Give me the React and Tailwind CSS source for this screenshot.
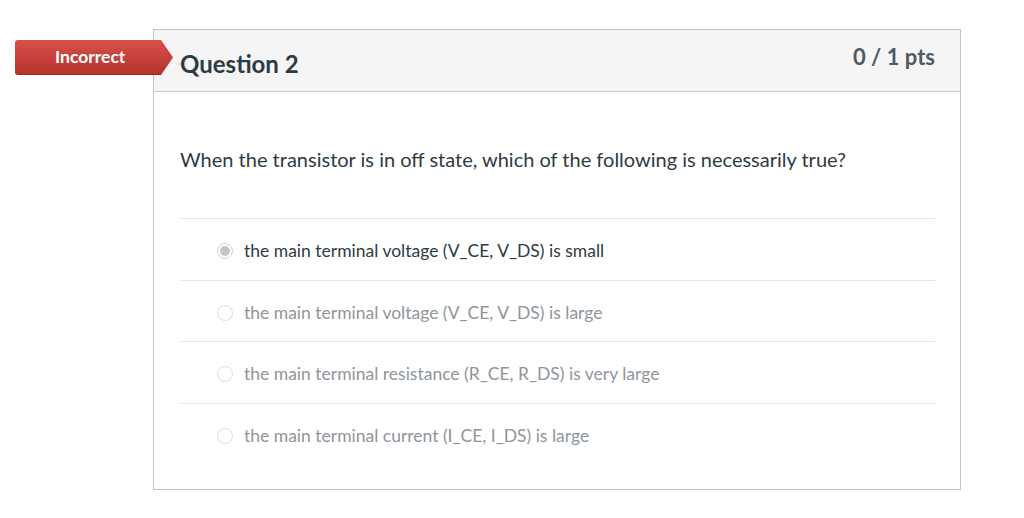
import React from "react";

const options = [
  { text: "the main terminal voltage (V_CE, V_DS) is small", selected: true },
  { text: "the main terminal voltage (V_CE, V_DS) is large", selected: false },
  { text: "the main terminal resistance (R_CE, R_DS) is very large", selected: false },
  { text: "the main terminal current (I_CE, I_DS) is large", selected: false },
];

export default function App() {
  return (
    <div className="relative w-[1024px] h-[518px] bg-white" style={{ fontFamily: "Lato, 'Noto Sans', sans-serif" }}>
      <div className="absolute left-[15px] top-[40px] h-[35px] w-[158px] flex items-center pl-[40px] text-white text-[17.5px] font-bold bg-gradient-to-b from-[#da4f49] to-[#b3332d] rounded-l-[3px] [clip-path:polygon(0_0,calc(100%_-_12px)_0,100%_50%,calc(100%_-_12px)_100%,0_100%)] shadow-[inset_0_-1px_0_rgba(0,0,0,0.15)]">
        Incorrect
      </div>
      <div className="pt-[29px] pl-[153px]">
        <div className="w-[808px] h-[461px] border border-[#c4c4c4] flex flex-col">
          <div className="h-[62px] bg-[#f5f5f5] border-b border-[#c7cdd1] flex justify-between items-start px-[26px] pr-[25px]">
            <div className="mt-[20px] text-[24px] leading-[28px] font-bold text-[#2d3b45]">Question 2</div>
            <div className="mt-[14px] text-[22px] leading-[26px] font-bold text-[#4f5a62]">0 / 1 pts</div>
          </div>
          <div className="px-[26px] pr-[25px] pt-[52px] pb-[25px] flex flex-col">
            <div className="text-[20px] leading-[30px] text-[#2d3b45]">
              When the transistor is in off state, which of the following is necessarily true?
            </div>
            <div className="mt-[44px] flex flex-col">
              {options.map((o, i) => (
                <div key={i} className="h-[61.5px] border-t border-[#e6e6e6] flex items-center pl-[37px] pt-[4px]">
                  {o.selected ? (
                    <span className="w-[16px] h-[16px] rounded-full border border-[#d4d4d4] bg-white flex items-center justify-center">
                      <span className="w-[10px] h-[10px] rounded-full bg-[#c6c6c6]"></span>
                    </span>
                  ) : (
                    <span className="w-[16px] h-[16px] rounded-full border border-[#dedede] bg-white"></span>
                  )}
                  <span className={`ml-[11px] text-[17.5px] leading-[24px] ${o.selected ? "text-[#2d3b45]" : "text-[#8e969c]"}`}>
                    {o.text}
                  </span>
                </div>
              ))}
            </div>
          </div>
        </div>
      </div>
    </div>
  );
}
